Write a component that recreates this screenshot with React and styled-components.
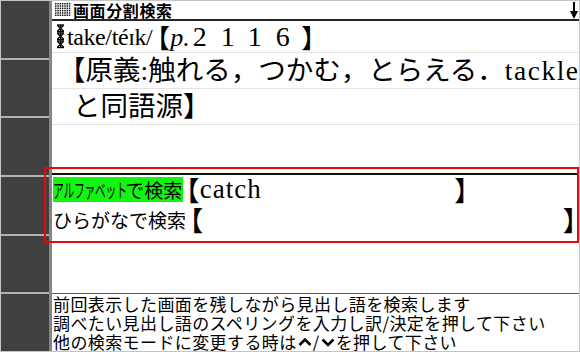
import React from "react";
import styled, { createGlobalStyle } from "styled-components";

const Global = createGlobalStyle`
  html, body { margin: 0; padding: 0; background: #fff; }
  body { width: 580px; height: 352px; overflow: hidden; font-family: "Noto Sans CJK JP", sans-serif; color: #000; }
`;

const Frame = styled.div`
  position: relative;
  box-sizing: border-box;
  width: 580px;
  height: 352px;
  border: 1px solid #c4c4c4;
  display: flex;
  background: #fff;
`;

const Sidebar = styled.div`
  width: 48px;
  flex: none;
  background: #404040;
  border-right: 3px solid #858585;
  display: flex;
  flex-direction: column;
`;

const SideCell = styled.div`
  flex: 1;
  border-bottom: 2px solid #b2b2b2;
  &:last-child { border-bottom: none; }
`;

const Main = styled.div`
  flex: 1;
  min-width: 0;
  display: flex;
  flex-direction: column;
`;

const TitleBar = styled.div`
  height: 18px;
  flex: none;
  border-bottom: 2px solid #262626;
  display: flex;
  align-items: center;
  padding-left: 3px;
`;

const TitleText = styled.span`
  font-family: "Noto Sans CJK JP", sans-serif;
  font-weight: 700;
  font-size: 16px;
  line-height: 18px;
  letter-spacing: 0.6px;
  margin-left: 2px;
  flex: 1;
`;

const EntryLine = styled.div`
  height: ${(p) => p.h}px;
  flex: none;
  border-bottom: 1px solid #e3e3e3;
  display: flex;
  align-items: center;
  padding-left: ${(p) => p.indent}px;
  white-space: nowrap;
  overflow: hidden;
  font-family: "Liberation Serif", "Noto Sans CJK JP", serif;
  font-size: 27.5px;
  line-height: 1;
`;

const Headword = styled.span`
  font-family: "Liberation Serif", "DejaVu Serif", serif;
  font-size: 24px;
  letter-spacing: -0.4px;
  margin-left: 2px;
`;

const Bracket = styled.span`
  font-family: "Noto Sans CJK JP", sans-serif;
  font-feature-settings: "palt";
  font-size: ${(p) => p.size || 27}px;
  line-height: 1;
  margin-left: ${(p) => p.ml || 0}px;
  margin-right: ${(p) => p.mr || 0}px;
`;

const PageRef = styled.span`
  font-family: "Liberation Serif", serif;
  font-size: 26px;
  i { font-style: italic; margin-right: 3px; }
`;

const Digits = styled.span`
  font-size: 28px;
  letter-spacing: 14px;
  margin-right: -2px;
`;

const Latin = styled.span`
  font-family: "Liberation Serif", serif;
  letter-spacing: ${(p) => p.ls || 0}px;
`;

const Spacer = styled.div`
  flex: ${(p) => (p.h ? "none" : "1")};
  height: ${(p) => (p.h ? `${p.h}px` : "auto")};
`;

const Panel = styled.div`
  flex: none;
  border-top: 2px solid #111;
  display: flex;
  flex-direction: column;
  padding-left: 1px;
`;

const SearchRow = styled.div`
  height: ${(p) => p.h}px;
  display: flex;
  align-items: center;
`;

const Label = styled.span`
  font-family: "Noto Sans CJK JP", sans-serif;
  font-size: 19px;
  line-height: 25px;
  padding-right: 1px;
  background: ${(p) => (p.active ? "#11f511" : "transparent")};
  white-space: nowrap;
  display: flex;
`;

const Narrow = styled.span`
  display: inline-block;
  transform: scaleX(0.57);
  transform-origin: left center;
  margin-right: -57px;
  letter-spacing: -0.5px;
`;

const Field = styled.div`
  display: flex;
  align-items: center;
  ${(p) => (p.w ? `width: ${p.w}px;` : "flex: 1; padding-right: 2px;")}
  margin-left: 2px;
`;

const Value = styled.span`
  flex: 1;
  font-family: "Liberation Serif", serif;
  font-size: 27px;
  letter-spacing: 1px;
  line-height: 1;
  padding-left: 1px;
`;

const Help = styled.div`
  flex: none;
  border-top: 1px solid #595959;
  padding-left: 1px;
  font-family: "Noto Sans CJK JP", sans-serif;
  font-size: 17px;
  line-height: 19px;
  letter-spacing: 0.4px;
  white-space: nowrap;
  overflow: hidden;
`;

const HelpLine = styled.div`
  height: 19px;
  display: flex;
  align-items: center;
`;

const Highlight = styled.div`
  position: absolute;
  left: 43px;
  top: 166px;
  width: 535px;
  height: 76px;
  box-sizing: border-box;
  border: 2px solid #e80a0a;
  pointer-events: none;
`;

const GridIcon = () => {
  const cells = [];
  for (let r = 0; r < 6; r++)
    for (let c = 0; c < 7; c++)
      cells.push(<rect key={`${r}-${c}`} x={c * 2.3} y={r * 2.3} width="1.5" height="1.5" fill="#1a1a1a" />);
  return (
    <svg width="16" height="14" viewBox="0 0 16 14">
      {cells}
    </svg>
  );
};

const DownArrow = () => (
  <svg width="8" height="17" viewBox="0 0 8 17" style={{ marginRight: 1 }}>
    <line x1="4" y1="0" x2="4" y2="11" stroke="#000" strokeWidth="2" />
    <polygon points="0,9 8,9 4,17" fill="#000" />
  </svg>
);

const Marker = () => (
  <svg width="9" height="25" viewBox="0 0 9 25" style={{ marginLeft: 4 }}>
    {[0, 1, 2].map((i) => {
      const y = 1 + i * 8;
      return (
        <g key={i} stroke="#000" strokeWidth="1.4" fill="none">
          <line x1="1" y1={y} x2="8" y2={y} />
          <line x1="1" y1={y + 6.5} x2="8" y2={y + 6.5} />
          <line x1="1.5" y1={y + 0.5} x2="7.5" y2={y + 6} />
          <line x1="7.5" y1={y + 0.5} x2="1.5" y2={y + 6} />
          <line x1="4.5" y1={y} x2="4.5" y2={y + 6.5} />
        </g>
      );
    })}
  </svg>
);

const Chevron = ({ up }) => (
  <svg width="14" height="12" viewBox="0 0 14 12" style={{ margin: "0 1px" }}>
    <polyline
      points={up ? "1.5,9 7,3.5 12.5,9" : "1.5,3.5 7,9 12.5,3.5"}
      fill="none"
      stroke="#000"
      strokeWidth="2.6"
    />
  </svg>
);

export default function App() {
  return (
    <>
      <Global />
      <Frame>
        <Sidebar>
          {Array.from({ length: 6 }).map((_, i) => (
            <SideCell key={i} />
          ))}
        </Sidebar>
        <Main>
          <TitleBar>
            <GridIcon />
            <TitleText>画面分割検索</TitleText>
            <DownArrow />
          </TitleBar>

          <EntryLine h={31} indent={0}>
            <Marker />
            <Headword>take/téɪk/</Headword>
            <Bracket size={26} ml={4} mr={1}>【</Bracket>
            <PageRef>
              <i>p.</i>
              <Digits>2116</Digits>
            </PageRef>
            <Bracket size={26} ml={0}>】</Bracket>
          </EntryLine>
          <EntryLine h={35} indent={6}>
            【原義<Latin>:</Latin>触れる，つかむ，とらえる．<Latin ls={1.5}>tackle</Latin>
          </EntryLine>
          <EntryLine h={35} indent={21}>
            と同語源】
          </EntryLine>

          <Spacer h={48} />

          <Panel>
            <SearchRow h={28}>
              <Label active>
                <Narrow>アルファベット</Narrow>で検索
              </Label>
              <Field w={283}>
                <Bracket>【</Bracket>
                <Value>catch</Value>
                <Bracket>】</Bracket>
              </Field>
            </SearchRow>
            <SearchRow h={32}>
              <Label>ひらがなで検索</Label>
              <Field>
                <Bracket>【</Bracket>
                <Value />
                <Bracket>】</Bracket>
              </Field>
            </SearchRow>
          </Panel>

          <Spacer />

          <Help>
            <HelpLine>前回表示した画面を残しながら見出し語を検索します</HelpLine>
            <HelpLine>調べたい見出し語のスペリングを入力し訳/決定を押して下さい</HelpLine>
            <HelpLine>
              他の検索モードに変更する時は<Chevron up />/<Chevron />を押して下さい
            </HelpLine>
          </Help>
        </Main>
        <Highlight />
      </Frame>
    </>
  );
}
